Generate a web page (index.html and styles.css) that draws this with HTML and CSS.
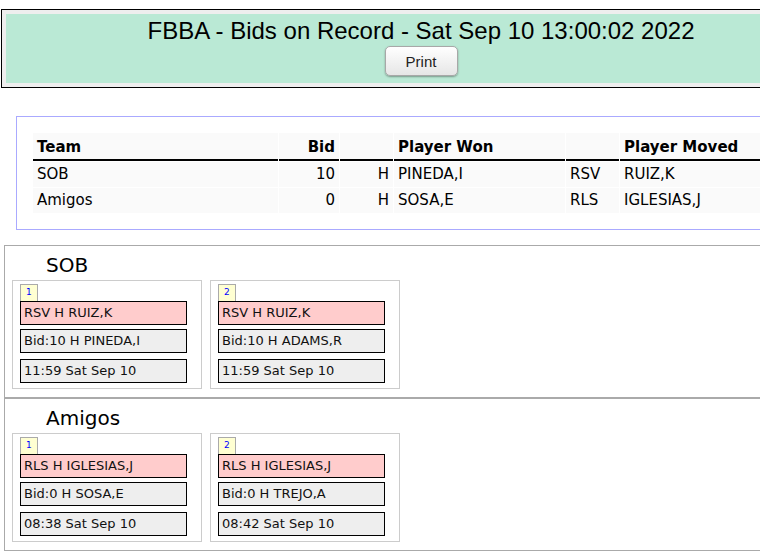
FILE: index.html
```html
<!DOCTYPE html>
<html lang="en">
<head>
    <meta charset="UTF-8">
    <title>FBBA - Bids on Record</title>
    <link rel="stylesheet" href="styles.css">
</head>
<body>
    <div class="page">
        <div class="header">
            <div class="header-inner">
                <h1>FBBA - Bids on Record - Sat Sep 10 13:00:02 2022</h1>
                <button class="print-btn" onclick="window.print()">Print</button>
            </div>
        </div>

        <div class="summary">
            <table class="bids">
                <tr>
                    <th class="col-team">Team</th>
                    <th class="col-bid num">Bid</th>
                    <th class="col-pos"></th>
                    <th class="col-player">Player Won</th>
                    <th class="col-pos"></th>
                    <th class="col-player">Player Moved</th>
                </tr>
                <tr>
                    <td>SOB</td>
                    <td class="num">10</td>
                    <td class="num">H</td>
                    <td>PINEDA,I</td>
                    <td>RSV</td>
                    <td>RUIZ,K</td>
                </tr>
                <tr>
                    <td>Amigos</td>
                    <td class="num">0</td>
                    <td class="num">H</td>
                    <td>SOSA,E</td>
                    <td>RLS</td>
                    <td>IGLESIAS,J</td>
                </tr>
            </table>
        </div>

        <div class="team">
            <h2>SOB</h2>
            <div class="cards">
                <div class="card">
                    <div class="tab">1</div>
                    <div class="line moved">RSV H RUIZ,K</div>
                    <div class="line bid">Bid:10 H PINEDA,I</div>
                    <div class="line time">11:59 Sat Sep 10</div>
                </div>
                <div class="card">
                    <div class="tab">2</div>
                    <div class="line moved">RSV H RUIZ,K</div>
                    <div class="line bid">Bid:10 H ADAMS,R</div>
                    <div class="line time">11:59 Sat Sep 10</div>
                </div>
            </div>
        </div>

        <div class="team">
            <h2>Amigos</h2>
            <div class="cards">
                <div class="card">
                    <div class="tab">1</div>
                    <div class="line moved">RLS H IGLESIAS,J</div>
                    <div class="line bid">Bid:0 H SOSA,E</div>
                    <div class="line time">08:38 Sat Sep 10</div>
                </div>
                <div class="card">
                    <div class="tab">2</div>
                    <div class="line moved">RLS H IGLESIAS,J</div>
                    <div class="line bid">Bid:0 H TREJO,A</div>
                    <div class="line time">08:42 Sat Sep 10</div>
                </div>
            </div>
        </div>
    </div>
</body>
</html>
```

FILE: styles.css
```css
* {
    box-sizing: border-box;
}

body {
    margin: 9px 0 0 1px;
    font-family: "DejaVu Sans", Verdana, sans-serif;
    color: #000;
    background-color: #fff;
}

.page {
    width: 840px;
}

.header {
    border: 1px solid #000;
    background-color: #eee;
    padding: 4px;
}

.header-inner {
    background-color: #bae9d5;
    text-align: center;
    padding: 3px 0 7px;
}

.header h1 {
    margin: 0;
    font-family: "Liberation Sans", Arial, sans-serif;
    font-weight: normal;
    font-size: 24px;
    line-height: 28px;
}

.print-btn {
    display: block;
    margin: 1px auto 0;
    width: 73px;
    height: 30px;
    font-family: "Liberation Sans", Arial, sans-serif;
    font-size: 15px;
    color: #222;
    background: linear-gradient(#fff, #e6e6e6);
    border: 1px solid #a8a8a8;
    border-radius: 5px;
    box-shadow: 0 1px 2px rgba(0, 0, 0, 0.35);
    cursor: pointer;
}

.summary {
    margin: 28px 15px 0 15px;
    border: 1px solid #aaf;
    padding: 15px;
}

.bids {
    border-spacing: 1px;
    font-size: 15px;
}

.bids th {
    height: 28px;
    padding: 2px 4px 0;
    line-height: 24px;
    text-align: left;
    background-color: #fafafa;
    border-bottom: 2px solid #000;
}

.bids td {
    height: 25px;
    padding: 0 4px;
    line-height: 25px;
    background-color: #fafafa;
}

.bids .num {
    text-align: right;
}

.col-team { width: 245px; }
.col-bid { width: 60px; }
.col-pos { width: 53px; }
.col-player { width: 171px; }

.summary + .team {
    margin-top: 15px;
}

.team {
    margin-left: 3px;
    border: 1px solid #aaa;
    padding: 7px 0 8px 7px;
}

.team h2 {
    margin: 0 0 3px 34px;
    font-size: 20px;
    font-weight: normal;
    line-height: 24px;
}

.cards {
    display: flex;
    gap: 8px;
}

.card {
    width: 190px;
    border: 1px solid #ccc;
    padding: 3px 14px 5px 7px;
}

.tab {
    width: 18px;
    height: 17px;
    border: 1px solid #aaa;
    border-bottom: none;
    background-color: #ffffd2;
    color: #00f;
    font-size: 9px;
    line-height: 15px;
    padding-left: 5px;
}

.line {
    width: 167px;
    height: 24px;
    border: 1px solid #000;
    padding: 0 3px;
    font-size: 13px;
    line-height: 22px;
    white-space: nowrap;
    color: #111;
}

.moved {
    background-color: #fcc;
}

.bid {
    margin-top: 4px;
    background-color: #eee;
}

.time {
    margin-top: 6px;
    background-color: #eee;
}
```
